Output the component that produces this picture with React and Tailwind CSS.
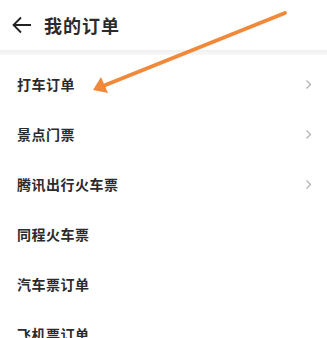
import React from "react";

const items = [
  { name: "打车订单", chevron: true },
  { name: "景点门票", chevron: true },
  { name: "腾讯出行火车票", chevron: true },
  { name: "同程火车票", chevron: false },
  { name: "汽车票订单", chevron: false },
  { name: "飞机票订单", chevron: false },
];

function Chevron() {
  return (
    <svg width="7" height="11" viewBox="0 0 7 11" fill="none">
      <path d="M1.5 1.5 L5.5 5.5 L1.5 9.5" stroke="#b3b3b3" strokeWidth="1.3" />
    </svg>
  );
}

export default function App() {
  return (
    <div
      className="relative h-[338px] w-[327px] overflow-hidden bg-white text-[#2b2b2b]"
      style={{ fontFamily: '"Noto Sans CJK SC", "Noto Sans", sans-serif' }}
    >
      <div className="flex h-[50px] items-center pl-[12px]">
        <svg width="20" height="18" viewBox="0 0 20 18" fill="none">
          <path d="M19 9 H2 M9 1.5 L1.5 9 L9 16.5" stroke="#222" strokeWidth="1.8" />
        </svg>
        <span className="ml-[12px] text-[18px] font-bold leading-none tracking-[1px]">我的订单</span>
      </div>
      <div className="h-[5px] bg-gradient-to-b from-[#f0f0f0] to-[#f8f8f8]" />
      <ul className="pt-[4px]">
        {items.map((it) => (
          <li key={it.name} className="flex h-[50px] items-center justify-between pl-[17px] pr-[15px]">
            <span className="text-[14px] font-bold leading-none tracking-[0.5px]">{it.name}</span>
            {it.chevron && <Chevron />}
          </li>
        ))}
      </ul>
      <svg className="pointer-events-none absolute left-0 top-0" width="327" height="338" viewBox="0 0 327 338">
        <line x1="285" y1="13" x2="103" y2="86" stroke="#f0893a" strokeWidth="4" strokeLinecap="round" />
        <polygon points="93,90 101,77 108,93" fill="#f0893a" />
      </svg>
    </div>
  );
}
